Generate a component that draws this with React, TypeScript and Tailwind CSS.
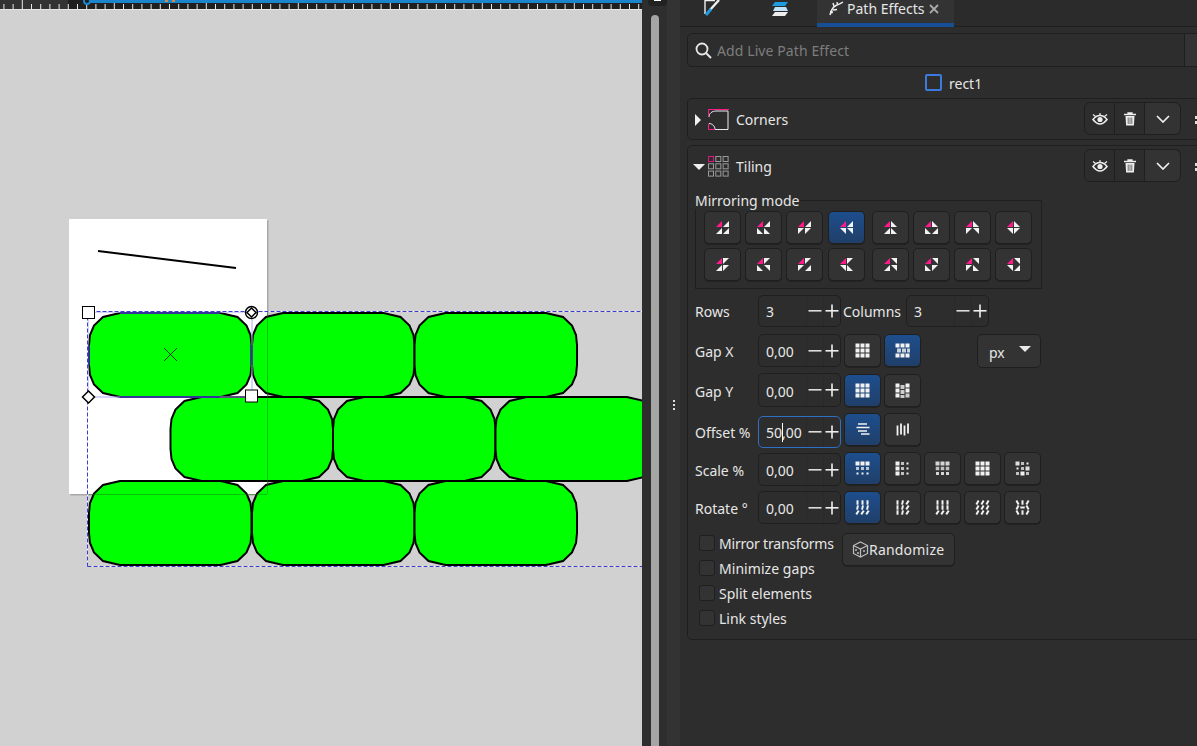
import React from "react";

const Q: Record<string, (x: number, y: number, s: number) => string> = {
  A: (x, y, s) => `${x + s},${y} ${x + s},${y + s} ${x},${y + s}`,
  B: (x, y, s) => `${x},${y} ${x},${y + s} ${x + s},${y + s}`,
  C: (x, y, s) => `${x},${y} ${x + s},${y} ${x},${y + s}`,
  D: (x, y, s) => `${x},${y} ${x + s},${y} ${x + s},${y + s}`,
};

function MirrorIcon({ code }: { code: string }) {
  const pos = [
    [0, 0],
    [7, 0],
    [0, 7],
    [7, 7],
  ];
  return (
    <svg width="13" height="13" viewBox="0 0 13 13">
      {code.split("").map((c, i) => (
        <polygon key={i} points={Q[c](pos[i][0], pos[i][1], 6)} fill={i === 0 ? "#ff1a8c" : "#f2f2f2"} />
      ))}
    </svg>
  );
}

function Btn({ active, extra = "", children }: { active?: boolean; extra?: string; children: React.ReactNode }) {
  return (
    <div
      className={
        "w-[37px] h-[33px] flex items-center justify-center rounded-[5px] border border-[#1f1f1f] shadow-[0_1px_0_#222] " +
        extra +
        " " +
        (active ? "bg-gradient-to-b from-[#1d4e8d] to-[#203f69]" : "bg-[#333333]")
      }
    >
      {children}
    </div>
  );
}

function GridIcon({ sizes, op, shiftRow, shiftCol }: { sizes: number[]; op?: number[]; shiftRow?: number; shiftCol?: number }) {
  return (
    <svg width="15" height="15" viewBox="0 0 15 15">
      {sizes.map((s, i) => {
        const c = i % 3;
        const r = Math.floor(i / 3);
        const cx = 2.5 + 5 * c + (shiftRow !== undefined && r === 1 ? shiftRow : 0);
        const cy = 2.5 + 5 * r + (shiftCol !== undefined && c === 1 ? shiftCol : 0);
        return <rect key={i} x={cx - s / 2} y={cy - s / 2} width={s} height={s} fill="#f2f2f2" opacity={op ? op[i] : 1} />;
      })}
    </svg>
  );
}

function RotIcon({ angles }: { angles: number[] }) {
  return (
    <svg width="15" height="15" viewBox="0 0 15 15">
      {angles.map((a, i) => {
        const c = i % 3;
        const r = Math.floor(i / 3);
        const cx = 2.5 + 5 * c;
        const cy = 2.5 + 5 * r;
        return <rect key={i} x={cx - 1} y={cy - 2.2} width="2" height="4.4" fill="#f2f2f2" transform={`rotate(${a} ${cx} ${cy})`} />;
      })}
    </svg>
  );
}

const full = [4, 4, 4, 4, 4, 4, 4, 4, 4];

function Spin({ value, focus, caret, tx = "" }: { value: string; focus?: boolean; caret?: boolean; tx?: string }) {
  return (
    <div
      className={
        "w-[83px] h-full flex items-stretch rounded-[5px] border " +
        (focus ? "border-[#2f6fc4] " : "border-[#1f1f1f] ")
      }
    >
      <div className={"w-[47px] pl-[7px] flex items-center text-[14px] text-[#e8e8e8] " + tx}>
        {caret ? (
          <span>
            50<span className="border-l border-white -mr-px"></span>,00
          </span>
        ) : (
          value
        )}
      </div>
      <div className="w-[17px] flex items-center justify-center border-l border-[#292929]">
        <svg width="14" height="14" viewBox="0 0 14 14">
          <rect x="0.5" y="6" width="13" height="1.6" fill="#dcdcdc" />
        </svg>
      </div>
      <div className="flex-1 flex items-center justify-center border-l border-[#292929]">
        <svg width="14" height="14" viewBox="0 0 14 14">
          <rect x="0.5" y="6" width="13" height="1.6" fill="#efefef" />
          <rect x="6.2" y="0.5" width="1.6" height="13" fill="#efefef" />
        </svg>
      </div>
    </div>
  );
}

function Row({ label, className, tx = "", children }: { label: string; className: string; tx?: string; children: React.ReactNode }) {
  return (
    <div className={"flex items-center pl-[7px] " + className}>
      <div className={"w-[63px] text-[14px] text-[#e6e6e6] whitespace-nowrap " + tx}>{label}</div>
      {children}
    </div>
  );
}

function Check({ label, track = "" }: { label: string; track?: string }) {
  return (
    <div className="h-[25px] flex items-center gap-[4px]">
      <div className="w-[16px] h-[16px] rounded-[3px] bg-[#333333] border border-[#1f1f1f]" />
      <span className={"text-[14px] text-[#e6e6e6] whitespace-nowrap pt-[2px] " + track}>{label}</span>
    </div>
  );
}

function Header({ open, icon, label }: { open?: boolean; icon: React.ReactNode; label: string }) {
  return (
    <div className={"flex items-center h-[41px] " + (open ? "pl-[5px]" : "pl-[7px]")}>
      <svg width={open ? 12 : 7} height="12" viewBox={open ? "0 0 12 12" : "0 0 7 12"}>
        {open ? <polygon points="0,3 12,3 6,9" fill="#f0f0f0" /> : <polygon points="0,0 6,6 0,12" fill="#f0f0f0" />}
      </svg>
      <div className={open ? "ml-[3px] w-[21px]" : "ml-[6px] w-[21px]"}>{icon}</div>
      <span className="ml-[7px] text-[14px] text-[#e6e6e6]">{label}</span>
      <div className="ml-auto -mt-[2px] mr-[14px] h-[33px] flex rounded-[6px] border border-[#1f1f1f]">
        <div className="w-[30px] flex items-center justify-center border-r border-[#1f1f1f]">
          <svg width="16" height="12" viewBox="0 0 16 12">
            <path d="M1 6.5C3.5 3.2 5.5 2.5 8 2.5s4.500.7 7 4c-2.500 3.300-4.500 4.500-7 4.500s-4.500-1.200-7-4.500z" fill="none" stroke="#eee" strokeWidth="1.6" />
            <circle cx="8" cy="6.5" r="2.600" fill="#eee" />
            <path d="M1 1.500l2.500 2M15 1.500l-2.500 2M8 0v2" stroke="#eee" strokeWidth="1.200" />
          </svg>
        </div>
        <div className="w-[30px] flex items-center justify-center border-r border-[#1f1f1f]">
          <svg width="12" height="14" viewBox="0 0 12 14">
            <path d="M0 2.500h12M4 2.500V1h4v1.500" fill="none" stroke="#eee" strokeWidth="1.300" />
            <path d="M1.500 4h9l-.6 9.500H2.100z" fill="#eee" />
            <path d="M4.200 5.500v6.500M6 5.500v6.500M7.800 5.500v6.500" stroke="#333" strokeWidth=".7" />
          </svg>
        </div>
        <div className="w-[35px] flex items-center justify-center bg-[#333333] rounded-r-[6px]">
          <svg width="14" height="8" viewBox="0 0 14 8">
            <path d="M1 1l6 6 6-6" fill="none" stroke="#eee" strokeWidth="1.700" />
          </svg>
        </div>
      </div>
      <div className="w-[3px] flex flex-col gap-[2px] mr-[13px]">
        <div className="w-[3px] h-[3px] bg-[#ddd]" />
        <div className="w-[3px] h-[3px] bg-[#ddd]" />
      </div>
    </div>
  );
}

function tilePath(x: number, y: number) {
  const w = 162.5;
  const h = 84;
  const c: [number, number][] = [
    [31, 0],
    [14, 4],
    [5, 12.500],
    [1, 22],
    [0, 32],
  ];
  const pts: string[] = [];
  c.forEach(([a, b]) => pts.push(`${x + a},${y + b}`));
  [...c].reverse().forEach(([a, b]) => pts.push(`${x + a},${y + h - b}`));
  c.forEach(([a, b]) => pts.push(`${x + w - a},${y + h - b}`));
  [...c].reverse().forEach(([a, b]) => pts.push(`${x + w - a},${y + b}`));
  return pts.join(" ");
}

function Canvas() {
  const ticks: number[] = [];
  for (let x = 3.400; x < 642; x += 9.2) ticks.push(x);
  const tiles: [number, number][] = [
    [89, 313],
    [252, 313],
    [414.500, 313],
    [170.500, 397],
    [333, 397],
    [495.500, 397],
    [89, 481],
    [252, 481],
    [414.500, 481],
  ];
  return (
    <div className="w-[642px] h-full flex flex-col overflow-hidden bg-[#d1d1d1]">
      <svg width="642" height="10" viewBox="0 0 642 10" className="block shrink-0">
        <rect width="642" height="10" fill="#1f1f1f" />
        <rect width="68" height="9" fill="#333333" />
        {ticks.map((x, i) => (
          <rect key={i} x={x} y={i % 10 === 2 ? 0 : 4} width="1" height={i % 10 === 2 ? 9 : 5} fill="#e8e8e8" />
        ))}
        <rect x="87" y="0" width="555" height="3" fill="#1a84cc" />
        <circle cx="87" cy="1" r="3" fill="#1f1f1f" stroke="#1a84cc" strokeWidth="2" />
        <rect x="165" y="0" width="3" height="2" fill="#d08a4a" />
        <rect x="172" y="0" width="3" height="2" fill="#d08a4a" />
        <rect x="0" y="9" width="642" height="1" fill="#e6e6e6" />
      </svg>
      <svg width="642" height="736" viewBox="0 10 642 736" className="block">
        <rect x="70.500" y="220.500" width="198" height="275" fill="#a8a8a8" />
        <rect x="69" y="219" width="198" height="275" fill="#ffffff" />
        <line x1="98" y1="251" x2="236" y2="268" stroke="#000" strokeWidth="2" />
        {tiles.map(([x, y], i) => (
          <polygon key={i} points={tilePath(x, y)} fill="#00ff00" stroke="#000" strokeWidth="2" strokeLinejoin="miter" />
        ))}
        <line x1="267.500" y1="312" x2="267.500" y2="494" stroke="#0a7a0a" strokeOpacity=".45" />
        <line x1="89" y1="494.500" x2="267" y2="494.500" stroke="#0a7a0a" strokeOpacity=".45" />
        <rect x="88" y="312" width="164" height="85" fill="none" stroke="#a8a8ff" />
        <path d="M120 313H220M120 397H220M89 345V365M251.500 345V365" stroke="#34349a" strokeWidth="1.800" />
        <path d="M87.500 566.500V311.500H642M87.500 566.500H642" fill="none" stroke="#fff" />
        <path d="M87.500 566.500V311.500H642M87.500 566.500H642" fill="none" stroke="#3c3cd0" strokeDasharray="4 2" />
        <path d="M164 348l13 13M177 348l-13 13" stroke="#000" strokeWidth=".8" />
        <rect x="82.500" y="306.500" width="12" height="12" fill="#fff" stroke="#000" />
        <rect x="245.500" y="390" width="12" height="12" fill="#fff" stroke="#000" />
        <polygon points="88.500,391 94.500,397 88.500,403 82.500,397" fill="#fff" stroke="#000" strokeWidth="1.500" />
        <circle cx="251.500" cy="312.500" r="6" fill="#fff" stroke="#000" strokeWidth="1.500" />
        <polygon points="251.500,308 256,312.500 251.500,317 247,312.500" fill="#fff" stroke="#000" strokeWidth="1.500" />
      </svg>
    </div>
  );
}

export default function App() {
  const mirrorRows = [
    [["AAAA", "AABB", "AACC", "AADD"], ["ABAB", "ABBA", "ABCD", "ABDC"]],
    [["ACAC", "ACBD", "ACCA", "ACDB"], ["ADAD", "ADBC", "ADCB", "ADDA"]],
  ];
  return (
    <div className="w-[1197px] h-[746px] flex overflow-hidden bg-[#2d2d2d] font-['Noto_Sans','Liberation_Sans',sans-serif]">
      <Canvas />
      {/* dock gutter */}
      <div className="w-[25px] h-full bg-[#2e2e2e] pl-[9px] pt-[15px] relative">
        <div className="w-[8px] h-full rounded-t-[4px] bg-[#a5a5a3]" />
        <div className="absolute left-[6px] top-0 w-[19px] h-[6px] rounded-b-[4px] bg-[#222222] flex justify-center">
          <div className="w-[7px] h-[1px] bg-white" />
        </div>
      </div>
      <div className="w-[13px] h-full bg-[#333333] flex flex-col items-center justify-center gap-[2px]">
        <div className="w-[2px] h-[2px] bg-[#e0e0e0] mt-[64px]" />
        <div className="w-[2px] h-[2px] bg-[#e0e0e0]" />
        <div className="w-[2px] h-[2px] bg-[#e0e0e0]" />
      </div>

      {/* panel */}
      <div className="w-[517px] h-full flex flex-col overflow-hidden bg-[#2d2d2d]">
        <div className="h-[27px] shrink-0 flex bg-[#2b2b2b] border-b border-[#1f1f1f]">
          <div className="w-[70px] flex justify-center">
            <svg width="16" height="16" viewBox="0 0 16 16" className="ml-[-6px]">
              <path d="M1 14V.5H11" fill="none" stroke="#f0f0f0" strokeWidth="1.400" />
              <path d="M15 0L6 10" stroke="#f0f0f0" strokeWidth="2.400" />
              <path d="M7 9L2 15" stroke="#1d9be0" strokeWidth="3" />
            </svg>
          </div>
          <div className="w-[60px] flex justify-center pt-[2px]">
            <svg width="16" height="14" viewBox="0 0 16 14">
              <polygon points="3,0 16,0 13,4 0,4" fill="#1d9be0" />
              <polygon points="3,5 14,5 16,9 1,9" fill="#bfe4f7" />
              <polygon points="3,10 16,10 13,14 0,14" fill="#ededed" />
            </svg>
          </div>
          <div className="ml-[7px] w-[137px] h-[27px] bg-[#333333] border-b-[4px] border-[#174f96] flex items-start pl-[12px] gap-[3px]">
            <svg width="15" height="15" viewBox="0 0 15 15" className="mt-[1px]">
              <path d="M1 14C2 9 4 6 7 4.500C9 3.500 11 3 14 1" fill="none" stroke="#eee" strokeWidth="1.500" />
              <path d="M5 5.500L4 2M8.500 4L8 1M4 9L8 8.500" fill="none" stroke="#eee" strokeWidth="1.400" />
              <circle cx="2.500" cy="11" r="1.500" fill="#eee" />
            </svg>
            <span className="text-[14px] leading-[17px] text-[#e6e6e6] whitespace-nowrap">Path Effects</span>
            <svg width="10" height="10" viewBox="0 0 10 10" className="ml-[2px] mt-[4px]">
              <path d="M1 1l8 8M9 1l-8 8" stroke="#a8a8a8" strokeWidth="1.800" />
            </svg>
          </div>
        </div>

        <div className="mt-[6px] ml-[7px] w-[525px] h-[34px] shrink-0 flex rounded-[5px] border border-[#1f1f1f]">
          <div className="w-[497px] flex items-center pl-[7px] gap-[5px] border-r border-[#1f1f1f]">
            <svg width="17" height="17" viewBox="0 0 17 17">
              <circle cx="7" cy="7" r="5.500" fill="none" stroke="#e8e8e8" strokeWidth="1.800" />
              <path d="M11 11l5 5" stroke="#e8e8e8" strokeWidth="2" />
            </svg>
            <span className="text-[14px] text-[#7d7d7d] tracking-[0.1px]">Add Live Path Effect</span>
          </div>
          <div className="flex-1 bg-[#333333]" />
        </div>

        <div className="h-[31px] shrink-0 flex items-center pl-[245px] gap-[7px]">
          <div className="w-[17px] h-[17px] border-[2px] border-[#3d7ae0] rounded-[2px]" />
          <span className="text-[14px] text-[#e6e6e6] pt-[1px]">rect1</span>
        </div>

        <div className="ml-[7px] w-[525px] shrink-0 h-[42px] rounded-[5px] border border-[#1f1f1f]">
          <Header
            label="Corners"
            icon={
              <svg width="21" height="21" viewBox="0 0 21 21">
                <path d="M1 8C1 4.500 4 2 8 2H20V20.500H7C7 17 4 14.500 1 14.500" fill="none" stroke="#ececec" />
                <path d="M.5 7V.5H21M.5 14.500V20.500H7" fill="none" stroke="#ff1a8c" />
              </svg>
            }
          />
        </div>

        <div className="mt-[5px] ml-[7px] w-[525px] shrink-0 h-[495px] rounded-[5px] border border-[#1f1f1f]">
          <Header
            open
            label="Tiling"
            icon={
              <svg width="21" height="21" viewBox="0 0 21 21">
                {[0, 1, 2, 3, 4, 5, 6, 7, 8].map((i) => (
                  <rect
                    key={i}
                    x={0.5 + (i % 3) * 7.300}
                    y={0.5 + Math.floor(i / 3) * 7.300}
                    width="5"
                    height="5"
                    fill="none"
                    stroke={i === 0 ? "#d81a80" : "#9a9a9a"}
                  />
                ))}
              </svg>
            }
          />
          <div className="relative ml-[7px] mt-[13px] w-[347px] h-[89px] border border-[#1f1f1f] pt-[10px] pl-[8px] flex flex-col gap-[4px]">
            <span className="absolute left-[-1px] top-[-8px] text-[14px] leading-[16px] bg-[#2d2d2d] pr-[1px] text-[#e6e6e6]">Mirroring mode</span>
            {mirrorRows.map((r, i) => (
              <div key={i} className="flex gap-[7px]">
                {r.map((g, j) => (
                  <div key={j} className="flex gap-[4px]">
                    {g.map((code, k) => (
                      <Btn key={code} active={code === "AADD"} extra={j === 0 && k === 3 ? "ml-[1px]" : ""}>
                        <MirrorIcon code={code} />
                      </Btn>
                    ))}
                  </div>
                ))}
              </div>
            ))}
          </div>

          <Row label="Rows" className="mt-[6px] h-[32px]">
            <Spin value="3" />
            <span className="ml-[2px] w-[63px] text-[14px] text-[#e6e6e6]">Columns</span>
            <Spin value="3" />
          </Row>
          <Row label="Gap X" tx="pt-[2px]" className="mt-[7px] h-[33px]">
            <Spin value="0,00" tx="pt-[2px]" />
            <div className="ml-[3px] flex gap-[3px]">
              <Btn><GridIcon sizes={full} /></Btn>
              <Btn active><GridIcon sizes={full} shiftRow={1.500} op={[1, 1, 1, 0.8, 0.8, 0.8, 1, 1, 1]} /></Btn>
            </div>
            <div className="ml-[56px] w-[64px] h-[34px] flex items-center rounded-[5px] border border-[#1f1f1f] bg-[#333333] pl-[11px]">
              <span className="text-[14px] text-[#e6e6e6] pt-[4px]">px</span>
              <svg width="12" height="6" viewBox="0 0 12 6" className="ml-[14px] mb-[3px]">
                <polygon points="0,0 12,0 6,6" fill="#e8e8e8" />
              </svg>
            </div>
          </Row>
          <Row label="Gap Y" tx="pt-[3px]" className="mt-[6px] h-[34px]">
            <Spin value="0,00" tx="pt-[3px]" />
            <div className="ml-[3px] flex gap-[3px]">
              <Btn active><GridIcon sizes={full} /></Btn>
              <Btn><GridIcon sizes={full} shiftCol={1.500} op={[1, 0.8, 1, 1, 0.8, 1, 1, 0.8, 0.8]} /></Btn>
            </div>
          </Row>
          <Row label="Offset %" className="mt-[9px] h-[32px]">
            <Spin value="50,00" focus caret />
            <div className="ml-[3px] flex gap-[3px] -mt-[6px]">
              <Btn active>
                <svg width="14" height="12" viewBox="0 0 14 12">
                  <path d="M2 1h9M0.500 4.500h13M2 8h9M5 11h8.500" stroke="#f2f2f2" strokeWidth="1.700" />
                </svg>
              </Btn>
              <Btn>
                <svg width="14" height="13" viewBox="0 0 14 13">
                  <path d="M1.500 2.500v10M5 .5v11M8.500 2.500v10M12 .5v10" stroke="#f2f2f2" strokeWidth="1.800" />
                </svg>
              </Btn>
            </div>
          </Row>
          <Row label="Scale %" tx="pt-[2px]" className="mt-[5px] h-[33px]">
            <Spin value="0,00" tx="pt-[2px]" />
            <div className="ml-[3px] flex gap-[3px] -mt-[3px]">
              <Btn active><GridIcon sizes={[4, 4, 4, 3, 3, 3, 2, 2, 2]} op={[1, 1, 1, 0.75, 0.75, 0.75, 1, 1, 1]} /></Btn>
              <Btn><GridIcon sizes={[4, 3, 2, 4, 3, 2, 4, 3, 2]} op={[1, 0.75, 1, 1, 0.75, 1, 1, 0.75, 1]} /></Btn>
              <Btn><GridIcon sizes={[4, 4, 4, 3.500, 3.500, 3.500, 3, 3, 3]} op={[0.85, 0.85, 0.85, 0.75, 0.75, 0.75, 0.85, 0.85, 0.85]} /></Btn>
              <Btn><GridIcon sizes={full} /></Btn>
              <Btn><GridIcon sizes={[4, 3, 2, 2, 3, 4, 3, 4, 3]} op={[0.9, 0.75, 1, 1, 0.75, 0.9, 0.75, 1, 0.75]} /></Btn>
            </div>
          </Row>
          <Row label="Rotate °" tx="pt-[1px]" className="mt-[5px] h-[33px]">
            <Spin value="0,00" tx="pt-[1px]" />
            <div className="ml-[3px] flex gap-[3px]">
              <Btn active><RotIcon angles={[0, 0, 0, 12, 12, 12, 35, 35, 35]} /></Btn>
              <Btn><RotIcon angles={[0, 12, 35, 0, 12, 35, 0, 12, 35]} /></Btn>
              <Btn><RotIcon angles={[0, 0, 0, 0, 0, 0, 35, 35, 35]} /></Btn>
              <Btn><RotIcon angles={[30, 30, 30, 30, 30, 30, 30, 30, 30]} /></Btn>
              <Btn><RotIcon angles={[-30, 0, 30, 30, 90, -30, -30, 0, 30]} /></Btn>
            </div>
          </Row>

          <div className="flex pl-[11px] mt-[6px]">
            <div className="w-[143px] flex flex-col">
              <Check label="Mirror transforms" track="tracking-[-0.2px]" />
              <Check label="Minimize gaps" track="tracking-[0.05px]" />
              <Check label="Split elements" />
              <Check label="Link styles" />
            </div>
            <div className="mt-[3px] w-[113px] h-[33px] flex items-center rounded-[5px] border border-[#1f1f1f] bg-[#333333] pl-[9px] shadow-[0_1px_0_#222]">
              <svg width="17" height="17" viewBox="0 0 17 17">
                <path d="M8.500 1L15.500 4.500V12.500L8.500 16L1.500 12.500V4.500z" fill="none" stroke="#bdbdbd" strokeWidth="1.200" />
                <path d="M1.500 4.500L8.500 8L15.500 4.500M8.500 8V16" fill="none" stroke="#bdbdbd" strokeWidth="1.200" />
                <circle cx="4" cy="9" r="1" fill="#bdbdbd" />
                <circle cx="6" cy="12" r="1" fill="#bdbdbd" />
                <circle cx="12" cy="10" r="1" fill="#bdbdbd" />
              </svg>
              <span className="text-[14px] text-[#e6e6e6] tracking-[0.2px]">Randomize</span>
            </div>
          </div>
        </div>
      </div>
    </div>
  );
}
